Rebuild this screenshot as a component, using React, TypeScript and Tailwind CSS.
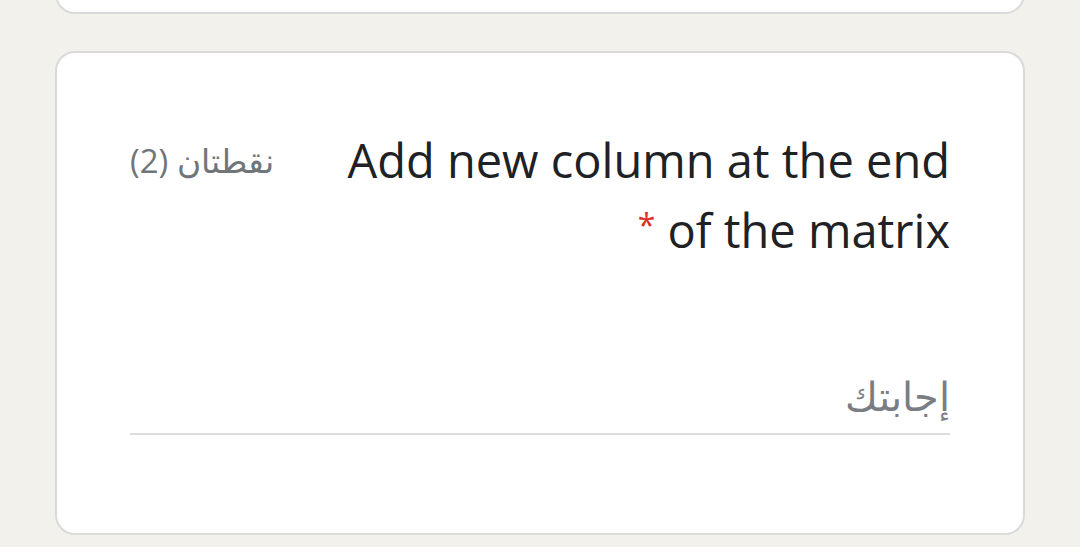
export default function App() {
  return (
    <div className="min-h-screen bg-[#f2f1ec] px-[55px] font-['Open_Sans',sans-serif]" dir="rtl">
      <div className="-mt-[10px] h-[24px] rounded-b-[20px] border-2 border-t-0 border-[#dadada] bg-white" />

      <div className="mt-[37px] h-[484px] rounded-[20px] border-2 border-[#dadada] bg-white px-[73px] pt-[72px]">
        <div className="flex items-start justify-between gap-[60px]">
          <h2 className="text-[47px] leading-[70px] text-[#202124] font-normal">
            Add new column at the end of the matrix{" "}
            <span className="align-top text-[32px] leading-[60px] text-[#d93025]">*</span>
          </h2>
          <span className="mt-[14px] shrink-0 whitespace-nowrap text-[33px] leading-[44px] text-[#70757a]">
            نقطتان (2)
          </span>
        </div>

        <div className="mt-[108px] border-b-2 border-[#dadce0] pb-[14px] text-[40px] leading-[46px] text-[#7a7e83]">
          إجابتك
        </div>
      </div>
    </div>
  );
}
